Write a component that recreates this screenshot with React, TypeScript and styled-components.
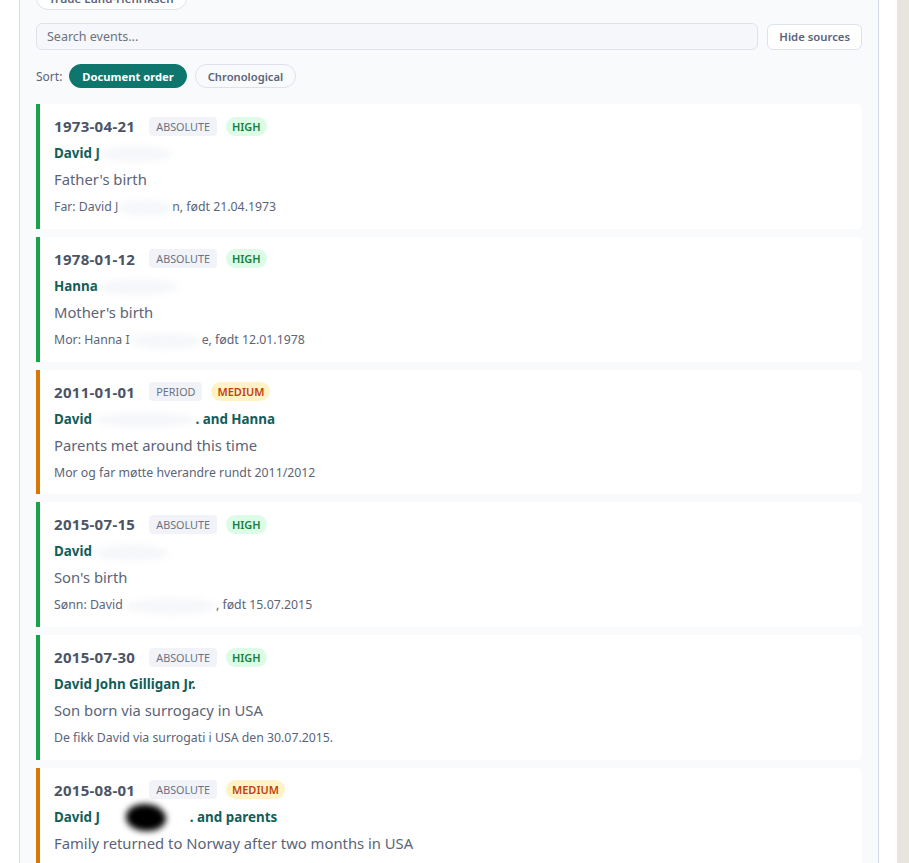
import React from 'react'
import styled, { createGlobalStyle } from 'styled-components'

type Level = 'high' | 'medium'

interface Part {
  text?: string
  blur?: number
  ink?: boolean
}

interface EventItem {
  date: string
  kind: string
  level: Level
  who: Part[]
  title: string
  source?: Part[]
}

const events: EventItem[] = [
  {
    date: '1973-04-21',
    kind: 'absolute',
    level: 'high',
    who: [{ text: 'David J' }, { blur: 72 }],
    title: "Father's birth",
    source: [{ text: 'Far: David J' }, { blur: 54 }, { text: 'n, født 21.04.1973' }],
  },
  {
    date: '1978-01-12',
    kind: 'absolute',
    level: 'high',
    who: [{ text: 'Hanna' }, { blur: 80 }],
    title: "Mother's birth",
    source: [{ text: 'Mor: Hanna I' }, { blur: 72 }, { text: 'e, født 12.01.1978' }],
  },
  {
    date: '2011-01-01',
    kind: 'period',
    level: 'medium',
    who: [{ text: 'David ' }, { blur: 100 }, { text: '. and Hanna' }],
    title: 'Parents met around this time',
    source: [{ text: 'Mor og far møtte hverandre rundt 2011/2012' }],
  },
  {
    date: '2015-07-15',
    kind: 'absolute',
    level: 'high',
    who: [{ text: 'David ' }, { blur: 74 }],
    title: "Son's birth",
    source: [{ text: 'Sønn: David ' }, { blur: 90 }, { text: ', født 15.07.2015' }],
  },
  {
    date: '2015-07-30',
    kind: 'absolute',
    level: 'high',
    who: [{ text: 'David John Gilligan Jr.' }],
    title: 'Son born via surrogacy in USA',
    source: [{ text: 'De fikk David via surrogati i USA den 30.07.2015.' }],
  },
  {
    date: '2015-08-01',
    kind: 'absolute',
    level: 'medium',
    who: [{ text: 'David J' }, { blur: 90, ink: true }, { text: '. and parents' }],
    title: 'Family returned to Norway after two months in USA',
  },
]

const GlobalStyle = createGlobalStyle`
  html, body {
    margin: 0;
    padding: 0;
    background: #ffffff;
    font-family: "Noto Sans", "Open Sans", sans-serif;
    overflow: hidden;
  }
`

const Page = styled.div`
  display: flex;
  height: 863px;
  overflow: hidden;
`

const Main = styled.main`
  flex: 1;
  padding: 0 18px 0 19px;
  background: #ffffff;
`

const Aside = styled.aside`
  width: 12px;
  background: #e8e4de;
`

const Panel = styled.section`
  margin-top: -14px;
  border: 1px solid #d3d9e6;
  border-top: none;
  background: #f9fafc;
  padding: 0 16px 16px;
  display: flex;
  flex-direction: column;
`

const PeopleRow = styled.div`
  display: flex;
  gap: 6px;
  margin-bottom: 13px;
`

const PersonChip = styled.span`
  display: inline-flex;
  align-items: center;
  height: 22px;
  padding: 0 12px;
  border: 1px solid #dde2ec;
  border-radius: 999px;
  background: #ffffff;
  color: #5b6478;
  font-size: 11.5px;
  font-weight: 600;
`

const Toolbar = styled.div`
  display: flex;
  gap: 9px;
  align-items: center;
`

const Search = styled.input`
  flex: 1;
  height: 27px;
  box-sizing: border-box;
  border: 1px solid #dde2ec;
  border-radius: 6px;
  background: #f6f7fa;
  padding: 0 10px;
  font-family: inherit;
  font-size: 12.5px;
  color: #374151;
  outline: none;

  &::placeholder {
    color: #6b7280;
  }
`

const GhostButton = styled.button`
  height: 26px;
  padding: 0 11px;
  border: 1px solid #dde2ec;
  border-radius: 6px;
  background: #ffffff;
  color: #5b6478;
  font-family: inherit;
  font-size: 11.3px;
  font-weight: 600;
  cursor: pointer;
`

const SortRow = styled.div`
  display: flex;
  align-items: center;
  gap: 8px;
  margin: 14px 0 16px;
`

const SortLabel = styled.span`
  color: #5b6478;
  font-size: 12px;
  margin-right: -1px;
`

const SortPill = styled.button<{ $active?: boolean }>`
  height: 24px;
  padding: 0 12px;
  border-radius: 999px;
  border: 1px solid ${({ $active }) => ($active ? '#0f766e' : '#dde2ec')};
  background: ${({ $active }) => ($active ? '#0f766e' : '#f9fafc')};
  color: ${({ $active }) => ($active ? '#ffffff' : '#5b6478')};
  font-family: inherit;
  font-size: 11.2px;
  font-weight: ${({ $active }) => ($active ? 700 : 600)};
  cursor: pointer;
`

const List = styled.div`
  display: flex;
  flex-direction: column;
  gap: 8px;
`

const Card = styled.article<{ $level: Level }>`
  background: #ffffff;
  border-left: 4px solid ${({ $level }) => ($level === 'high' ? '#16a34a' : '#d97706')};
  border-radius: 0 5px 5px 0;
  padding: 12px 14px 13.8px 14px;
  display: flex;
  flex-direction: column;
`

const CardHead = styled.div`
  display: flex;
  align-items: center;
  gap: 9px;
  height: 20px;
`

const DateText = styled.span`
  color: #4b5466;
  font-size: 15px;
  font-weight: 700;
  letter-spacing: 0.3px;
  margin-right: 5px;
`

const Tag = styled.span`
  display: inline-flex;
  align-items: center;
  height: 19px;
  padding: 0 7px;
  border-radius: 4px;
  background: #f1f3f8;
  color: #6b7280;
  font-size: 10.8px;
  text-transform: uppercase;
`

const LevelTag = styled.span<{ $level: Level }>`
  display: inline-flex;
  align-items: center;
  height: 19px;
  padding: 0 6px;
  border-radius: 999px;
  background: ${({ $level }) => ($level === 'high' ? '#dcfce7' : '#fef3c7')};
  color: ${({ $level }) => ($level === 'high' ? '#15803d' : '#c2410c')};
  font-size: 11px;
  font-weight: 600;
  text-transform: uppercase;
`

const Who = styled.div`
  margin-top: 8px;
  color: #115e59;
  font-size: 13.4px;
  font-weight: 700;
  line-height: 18px;
  height: 18px;
  white-space: pre;
`

const Title = styled.div`
  margin-top: 7px;
  color: #5b6478;
  font-size: 14.8px;
  line-height: 20px;
  height: 20px;
`

const Source = styled.div`
  margin-top: 10px;
  color: #5b6478;
  font-size: 12.3px;
  line-height: 16px;
  height: 16px;
  white-space: pre;
`

const Smudge = styled.span<{ $ink?: boolean }>`
  display: inline-block;
  vertical-align: middle;
  height: 16px;
  border-radius: 50%;
  background: ${({ $ink }) => ($ink ? 'transparent' : 'rgba(238, 241, 246, 0.55)')};
  filter: blur(3px);
  position: relative;

  &::after {
    content: '';
    display: ${({ $ink }) => ($ink ? 'block' : 'none')};
    position: absolute;
    left: 26px;
    top: -6px;
    width: 40px;
    height: 27px;
    border-radius: 50% 60% 50% 55%;
    background: #000000;
    filter: blur(0.5px);
  }
`

const Parts = ({ parts }: { parts: Part[] }) => (
  <>
    {parts.map((p, i) =>
      p.text !== undefined ? (
        <React.Fragment key={i}>{p.text}</React.Fragment>
      ) : (
        <Smudge key={i} $ink={p.ink} style={{ width: p.blur }} />
      ),
    )}
  </>
)

const App = () => (
  <>
    <GlobalStyle />
    <Page>
      <Main>
        <Panel>
          <PeopleRow>
            <PersonChip>Trude Lund-Henriksen</PersonChip>
          </PeopleRow>
          <Toolbar>
            <Search placeholder="Search events..." />
            <GhostButton>Hide sources</GhostButton>
          </Toolbar>
          <SortRow>
            <SortLabel>Sort:</SortLabel>
            <SortPill $active>Document order</SortPill>
            <SortPill>Chronological</SortPill>
          </SortRow>
          <List>
            {events.map((ev) => (
              <Card key={ev.date + ev.title} $level={ev.level}>
                <CardHead>
                  <DateText>{ev.date}</DateText>
                  <Tag>{ev.kind}</Tag>
                  <LevelTag $level={ev.level}>{ev.level}</LevelTag>
                </CardHead>
                <Who>
                  <Parts parts={ev.who} />
                </Who>
                <Title>{ev.title}</Title>
                {ev.source && (
                  <Source>
                    <Parts parts={ev.source} />
                  </Source>
                )}
              </Card>
            ))}
          </List>
        </Panel>
      </Main>
      <Aside />
    </Page>
  </>
)

export default App
